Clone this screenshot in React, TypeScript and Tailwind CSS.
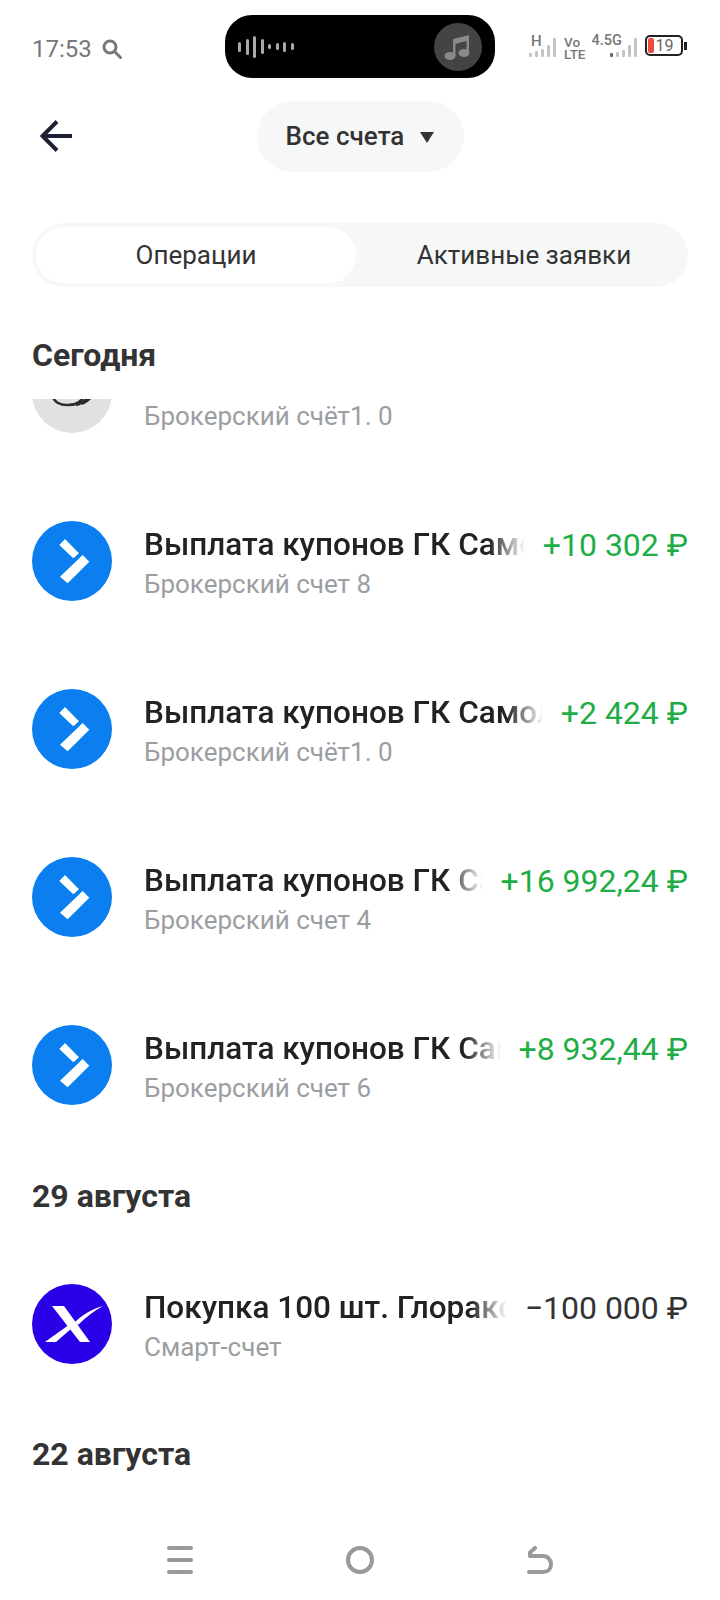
const rowFade = '[mask-image:linear-gradient(to_right,black_calc(100%-36px),transparent)]';

const BlueLogo = () => (
  <svg viewBox="0 0 80 80" className="h-20 w-20 shrink-0">
    <circle cx="40" cy="40" r="40" fill="#0b7ff0" />
    <path d="M33 18 47 32.300 41.300 37.300 27.300 24Z" fill="#fff" />
    <path d="M50.700 34 57.300 40.700 35.700 62.300 28 55.700Z" fill="#fff" />
  </svg>
);

const PurpleLogo = () => (
  <svg viewBox="0 0 80 80" className="h-20 w-20 shrink-0">
    <circle cx="40" cy="40" r="40" fill="#2a00e6" />
    <path d="M20 22H32L58 58H48Z" fill="#fff" />
    <path d="M71 22C60 25 50 31 43 38L46 41C53 34 62 27 71 22Z" fill="#fff" />
    <path d="M13 58H24L40 44 38 40C30 46 21 52 13 58Z" fill="#fff" />
  </svg>
);

const GreyLogo = () => (
  <svg viewBox="0 0 80 80" className="h-20 w-20 shrink-0">
    <circle cx="40" cy="40" r="40" fill="#dfe1e3" />
    <g fill="none" stroke="#2b2b2b" strokeWidth="2.5">
      <path d="M21 44c2 6 7 8 14 8 9 0 16-2 24-8" />
      <path d="M38 52c6 0 10-3 14-8" />
      <path d="M44 52c5-1 9-4 12-8" />
      <path d="M50 51c4-2 7-4 9-7" />
    </g>
  </svg>
);

function Row({ logo, title, sub, amount, green }: { logo: React.ReactNode; title: string; sub: string; amount?: string; green?: boolean }) {
  return (
    <div className="flex h-[168px] shrink-0 items-center gap-8">
      {logo}
      <div className="flex min-w-0 flex-1 flex-col pt-[3px]">
        <div className="flex items-center">
          <div className={`min-w-0 flex-1 overflow-hidden whitespace-nowrap text-[31.5px] leading-[38px] font-medium text-[#222] ${rowFade}`}>{title || '\u00a0'}</div>
          {amount && <div className={`ml-[18px] shrink-0 whitespace-nowrap text-[32px] leading-[38px] ${green ? 'text-[#1fad45]' : 'text-[#333]'}`}>{amount}</div>}
        </div>
        <div className="mt-1 text-[26px] leading-[32px] text-[#9a9ea2]">{sub}</div>
      </div>
    </div>
  );
}

function Bars({ heights, first }: { heights: number[]; first?: string }) {
  return (
    <div className="flex items-end gap-[3px]">
      {heights.map((h, i) => (
        <div key={i} className={`w-[3px] rounded-[1px] ${i === 0 && first ? first : 'bg-[#c4c4c4]'}`} style={{ height: h }} />
      ))}
    </div>
  );
}

function StatusBar() {
  return (
    <div className="flex h-[98px] shrink-0 items-start pl-8 pt-[15px]">
      <div className="flex w-[193px] items-center gap-[10px] pt-[19px]">
        <span className="text-[24px] leading-[30px] text-[#777]">17:53</span>
        <svg viewBox="0 0 20 20" className="h-5 w-5" fill="none" stroke="#777" strokeWidth="3" strokeLinecap="round">
          <circle cx="8" cy="8" r="6" />
          <path d="M13 13l5.500 5.500" />
        </svg>
      </div>
      <div className="flex h-[63px] w-[270px] items-center justify-between rounded-[27px] bg-black pr-[13px] pl-[13px]">
        <div className="flex items-center gap-[4.500px]">
          {[10, 16, 22, 15, 5, 7, 10, 7].map((h, i) => (
            <div key={i} className="w-[3px] rounded-full bg-[#aaa]" style={{ height: h }} />
          ))}
        </div>
        <div className="flex h-12 w-12 items-center justify-center rounded-full bg-[#444]">
          <svg viewBox="0 0 30 30" className="h-[30px] w-[30px]" fill="#8a8a8a">
            <path d="M10 7 26 3V20.500H23.500V9L12.500 12V24H10Z" />
            <ellipse cx="7" cy="24" rx="5.500" ry="4" />
            <ellipse cx="21" cy="21" rx="5.500" ry="4" />
          </svg>
        </div>
      </div>
      <div className="ml-[36px] flex items-start pt-[20px]">
        <div className="relative mr-[8px] h-[22px] w-[25px]">
          <span className="absolute top-[-1px] left-0 text-[15px] leading-[14px] font-medium text-[#777]">H</span>
          <div className="absolute right-0 bottom-0"><Bars heights={[4, 6, 8, 12, 19]} /></div>
        </div>
        <div className="mr-[6px] flex flex-col pt-[1px] text-[13.500px] leading-[12px] font-medium text-[#777]">
          <span>Vo</span>
          <span>LTE</span>
        </div>
        <div className="relative mr-[8px] h-[22px] w-[45px]">
          <span className="absolute top-[-1px] left-0 text-[14.500px] leading-[14px] font-medium text-[#777]">4.5G</span>
          <div className="absolute right-0 bottom-0"><Bars heights={[4, 5, 7, 12, 19]} first="bg-[#666]" /></div>
        </div>
        <div className="flex items-center">
          <div className="flex h-[21px] w-[38px] items-center gap-[2px] rounded-[5px] border-2 border-[#222] px-[1px]">
            <div className="h-[15px] w-[6px] rounded-[2px] bg-[#ee4b40]" />
            <span className="text-[16px] leading-[15px] text-[#666]">19</span>
          </div>
          <div className="ml-[1px] h-[8px] w-[3px] bg-[#222]" />
        </div>
      </div>
    </div>
  );
}

export default function App() {
  return (
    <div className="flex h-[1600px] w-[720px] flex-col overflow-hidden bg-white font-['Roboto',sans-serif]">
      <StatusBar />
      <div className="relative flex h-[77px] shrink-0 items-center justify-center">
        <svg viewBox="0 0 32 32" className="absolute top-[22px] left-10 h-8 w-8" fill="none" stroke="#1c2033" strokeWidth="4">
          <path d="M32 16H3M17 1.500 2.500 16 17 30.500" />
        </svg>
        <div className="flex h-[71px] w-[207px] items-center justify-center gap-4 rounded-[36px] bg-[#f6f8f8]">
          <span className="text-[26px] font-medium text-[#333]">Все счета</span>
          <div className="mt-[2px] h-0 w-0 border-x-[7px] border-t-[11px] border-x-transparent border-t-[#333]" />
        </div>
      </div>
      <div className="mx-8 mt-[48px] flex h-16 shrink-0 rounded-[32px] bg-[#f6f8f8] p-1 text-[26px] text-[#333]">
        <div className="flex w-[320px] items-center justify-center rounded-[28px] bg-white">Операции</div>
        <div className="flex flex-1 items-center justify-center pl-2">Активные заявки</div>
      </div>
      <div className="mt-[48px] shrink-0 px-8 text-[32px] leading-[40px] font-bold text-[#333]">Сегодня</div>
      <div className="mt-6 min-h-0 flex-1 overflow-hidden px-8">
        <div className="mt-[-90px]">
          <Row logo={<GreyLogo />} title="" sub="Брокерский счёт1. 0" />
          <Row logo={<BlueLogo />} title="Выплата купонов ГК Самолет" sub="Брокерский счет 8" amount="+10 302 ₽" green />
          <Row logo={<BlueLogo />} title="Выплата купонов ГК Самолет" sub="Брокерский счёт1. 0" amount="+2 424 ₽" green />
          <Row logo={<BlueLogo />} title="Выплата купонов ГК Самолет" sub="Брокерский счет 4" amount="+16 992,24 ₽" green />
          <Row logo={<BlueLogo />} title="Выплата купонов ГК Самолет" sub="Брокерский счет 6" amount="+8 932,44 ₽" green />
          <div className="mt-[27px] text-[32px] leading-[40px] font-bold text-[#333]">29 августа</div>
          <div className="mt-6">
            <Row logo={<PurpleLogo />} title="Покупка 100 шт. Глоракс" sub="Смарт-счет" amount="−100 000 ₽" />
          </div>
          <div className="mt-[26px] text-[32px] leading-[40px] font-bold text-[#333]">22 августа</div>
        </div>
      </div>
      <div className="grid h-[120px] shrink-0 grid-cols-3 px-[90px] pt-[66px]">
        <div className="flex justify-center">
          <div className="flex h-7 w-[26px] flex-col justify-between">
            <div className="h-1 rounded-full bg-[#999]" />
            <div className="h-1 rounded-full bg-[#999]" />
            <div className="h-1 rounded-full bg-[#999]" />
          </div>
        </div>
        <div className="flex justify-center">
          <div className="h-7 w-7 rounded-full border-4 border-[#999]" />
        </div>
        <div className="flex justify-center">
          <svg viewBox="0 0 26 28" className="h-7 w-[26px]" fill="none" stroke="#999" strokeWidth="4" strokeLinecap="round" strokeLinejoin="round">
            <path d="M2 26H16C21 26 24 22.500 24 18.500 24 14 21 10 16 10H3M8 2 3 6.500V10" />
          </svg>
        </div>
      </div>
    </div>
  );
}
